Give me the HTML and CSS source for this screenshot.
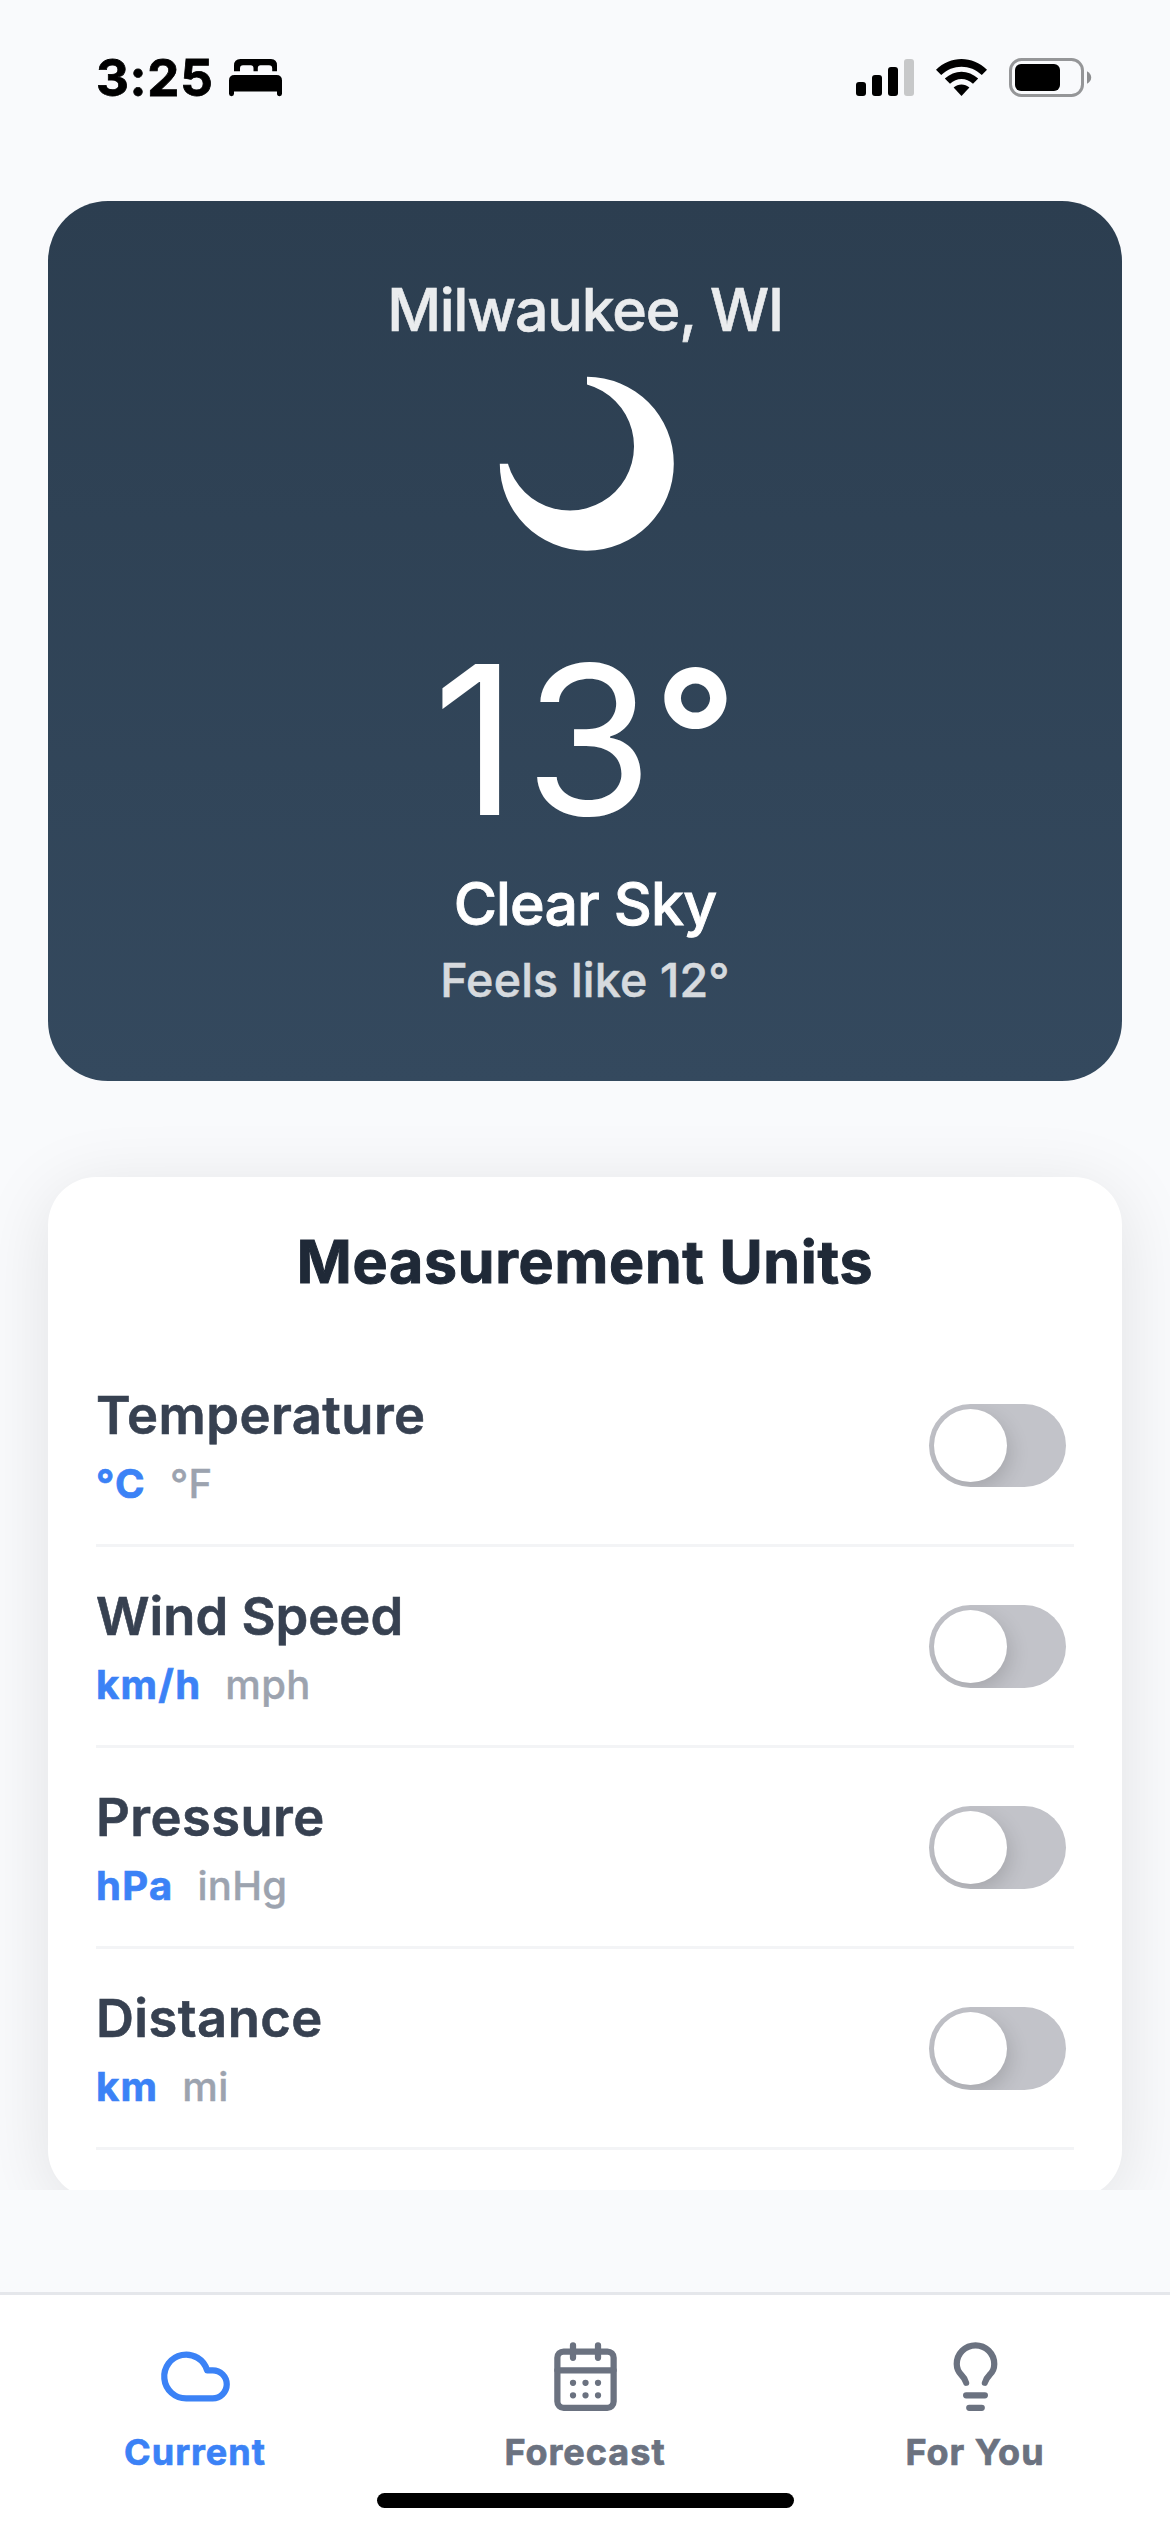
FILE: index.html
```html
<!DOCTYPE html>
<html lang="en">
<head>
<meta charset="utf-8">
<title>Weather</title>
<link rel="stylesheet" href="styles.css">
</head>
<body>
<div class="screen">
  <header class="status">
    <span class="time">3:25</span>
    <svg class="bed" width="53" height="38" viewBox="0 0 53 38">
      <path fill-rule="evenodd" d="M5 12.3V6.5Q5 0 11.500 0H42Q48 0 48 6.500V12.300H43.200V9.500Q43.200 6.300 40 6.300H31.500Q29 6.300 28.800 9V12.300H24.500V9Q24.300 6.300 21.800 6.300H14Q11 6.300 11 9.500V12.300Z"/>
      <path d="M0 21.500Q0 16 5.500 16H47.500Q53 16 53 21.500V34.800Q53 37.200 50.600 37.200Q48 37.200 48 34.800V32.500H5V34.800Q5 37.200 2.500 37.200Q0 37.200 0 34.800Z"/>
    </svg>
    <div class="indicators">
      <svg width="58" height="38" viewBox="0 0 58 38">
        <rect x="0" y="23" width="10" height="14" rx="3"/>
        <rect x="16" y="16" width="10" height="21" rx="3"/>
        <rect x="32" y="8" width="10" height="29" rx="3"/>
        <rect x="48" y="0" width="10" height="37" rx="3" fill="#c7c8c9"/>
      </svg>
      <svg class="wifi" width="51" height="38" viewBox="0 0 51 38">
        <path d="M0 10.800C14.500 -3.600 36.500 -3.600 51 10.800L45.800 16C34.500 4.900 16.500 4.900 5.200 16Z"/>
        <path d="M8.800 19.600C18.500 10.300 32.500 10.300 42.200 19.600L37 24.800C30.300 18.500 20.700 18.500 14 24.800Z"/>
        <path d="M17.600 28.600C22.200 24.600 28.800 24.600 33.400 28.600L25.500 37Z"/>
      </svg>
      <svg class="battery" width="83" height="40" viewBox="0 0 83 40">
        <rect x="1.500" y="1.500" width="72" height="36" rx="11" fill="none" stroke="#959698" stroke-width="3"/>
        <rect x="6" y="6" width="45" height="27" rx="6"/>
        <path d="M78 13.200Q82.200 15.500 82.200 19.500T78 25.800Z" fill="#8d8e90"/>
      </svg>
    </div>
  </header>

  <main class="content">
    <section class="weather">
      <div class="city">Milwaukee, WI</div>
      <svg class="moon" width="180" height="180" viewBox="495 374 180 180">
        <path d="M587 376.700A87 87 0 1 1 499.800 463.700L508 463.700A64.200 64.200 0 1 0 587 384.500Z" fill="#fff"/>
      </svg>
      <div class="temp"><span class="lead">1</span><span class="tail">3</span><span class="degree">°</span></div>
      <div class="condition">Clear Sky</div>
      <div class="feels">Feels like 12°</div>
    </section>

    <section class="units">
      <h2>Measurement Units</h2>
      <div class="row">
        <div><div class="label">Temperature</div><div class="options"><b>°C</b><span>°F</span></div></div>
        <div class="toggle"><i></i></div>
      </div>
      <div class="row">
        <div><div class="label label-tight">Wind Speed</div><div class="options"><b>km/h</b><span>mph</span></div></div>
        <div class="toggle"><i></i></div>
      </div>
      <div class="row">
        <div><div class="label">Pressure</div><div class="options"><b>hPa</b><span>inHg</span></div></div>
        <div class="toggle"><i></i></div>
      </div>
      <div class="row">
        <div><div class="label">Distance</div><div class="options"><b>km</b><span>mi</span></div></div>
        <div class="toggle"><i></i></div>
      </div>
    </section>
  </main>

  <nav class="tabs">
    <a class="tab active">
      <svg class="icon" viewBox="0 0 24 24"><path d="M17.500 19H9a7 7 0 1 1 6.710-9h1.790a4.500 4.500 0 1 1 0 9Z"/></svg>
      <span>Current</span>
    </a>
    <a class="tab">
      <svg class="icon" viewBox="0 0 24 24"><path d="M8 2v4M16 2v4M3 10h18M8 14h.01M12 14h.01M16 14h.01M8 18h.01M12 18h.01M16 18h.01"/><rect x="3" y="4" width="18" height="18" rx="2"/></svg>
      <span>Forecast</span>
    </a>
    <a class="tab">
      <svg class="icon" viewBox="0 0 24 24"><path d="M15 14c.2-1 .7-1.700 1.500-2.500 1-.9 1.500-2.200 1.500-3.500A6 6 0 0 0 6 8c0 1 .2 2.200 1.500 3.500.7.7 1.300 1.500 1.500 2.500M9 18h6M10 22h4"/></svg>
      <span>For You</span>
    </a>
    <div class="home"></div>
  </nav>
</div>
</body>
</html>
```
FILE: styles.css
```css
* {
  box-sizing: border-box;
}

body {
  margin: 0;
  font-family: Inter, "Liberation Sans", sans-serif;
  background: #f9fafc;
}

.screen {
  display: flex;
  flex-direction: column;
  width: 1170px;
  height: 2532px;
  overflow: hidden;
}

/* Status bar */
.status {
  display: flex;
  align-items: flex-start;
  height: 153px;
  flex: none;
  padding: 59px 78px 0 96px;
}

.time {
  width: 133px;
  font-size: 51px;
  font-weight: 700;
  line-height: 60px;
  letter-spacing: 0.7px;
  margin-top: -11px;
  -webkit-text-stroke: 0.8px;
}

.indicators {
  display: flex;
  margin-left: auto;
}

.wifi {
  margin-left: 22px;
}

.battery {
  margin: -1px 0 0 22px;
}

/* Scrolling content */
.content {
  flex: none;
  height: 2037px;
  padding: 48px 48px 0;
  overflow: hidden;
}

.weather {
  display: flex;
  flex-direction: column;
  align-items: center;
  height: 880px;
  padding-top: 73px;
  border-radius: 60px;
  background: linear-gradient(#2c3e50, #34495e);
  color: #fff;
}

.city {
  font-size: 59px;
  font-weight: 500;
  line-height: 72px;
  letter-spacing: -1.15px;
  opacity: 0.9;
  -webkit-text-stroke: 0.6px;
}

.moon {
  margin-top: 28px;
}

.temp {
  margin-top: 65px;
  font-size: 208px;
  font-weight: 400;
  line-height: 240px;
}

.lead {
  letter-spacing: 7px;
}

.tail {
  letter-spacing: 1px;
}

.degree {
  font-size: 182px;
  font-weight: 600;
  line-height: 0;
  vertical-align: 15px;
}

.condition {
  margin-top: 9px;
  font-size: 59px;
  font-weight: 500;
  line-height: 72px;
  letter-spacing: -0.9px;
  -webkit-text-stroke: 0.9px;
}

.feels {
  margin-top: 10px;
  font-size: 46.5px;
  font-weight: 500;
  line-height: 60px;
  letter-spacing: 0.2px;
  opacity: 0.8;
  -webkit-text-stroke: 0.5px;
}

.units {
  height: 1021px;
  margin-top: 96px;
  padding: 49px 48px 48px;
  border-radius: 48px;
  background: #fff;
  box-shadow: 0 12px 72px rgba(0, 0, 0, 0.1);
}

.units h2 {
  margin: 0 0 48px;
  font-size: 59px;
  font-weight: 700;
  line-height: 72px;
  letter-spacing: 0.75px;
  text-align: center;
  color: #1f2937;
  -webkit-text-stroke: 1px;
}

.row {
  display: flex;
  align-items: center;
  justify-content: space-between;
  height: 201px;
  padding-right: 8px;
  border-bottom: 3px solid #f3f4f6;
}

.label {
  font-size: 52.5px;
  font-weight: 600;
  line-height: 64px;
  letter-spacing: 0.45px;
  color: #374151;
  -webkit-text-stroke: 0.6px;
}

.label-tight {
  letter-spacing: 0;
}

.options {
  display: flex;
  gap: 24px;
  margin-top: 13px;
  font-size: 40px;
  font-weight: 500;
  line-height: 48px;
  letter-spacing: 0.3px;
  color: #9ca3af;
  -webkit-text-stroke: 0.4px;
}

.options b {
  font-weight: 700;
  letter-spacing: 1.3px;
  color: #3b82f6;
  -webkit-text-stroke: 0.7px;
}

.toggle {
  width: 137px;
  height: 83px;
  padding: 5px;
  border-radius: 42px;
  background: #c2c3c9;
  overflow: hidden;
}

.toggle i {
  display: block;
  width: 73px;
  height: 73px;
  border-radius: 50%;
  background: #fff;
  box-shadow: 3px 7px 20px rgba(0, 0, 0, 0.15);
}

/* Tab bar */
.tabs {
  position: relative;
  display: flex;
  height: 240px;
  margin-top: 102px;
  padding-top: 44px;
  border-top: 3px solid #e5e7eb;
  background: #fff;
}

.tab {
  display: flex;
  flex: 1;
  flex-direction: column;
  align-items: center;
  gap: 16px;
  font-size: 36px;
  font-weight: 700;
  line-height: 44px;
  letter-spacing: 1px;
  color: #6b7280;
  -webkit-text-stroke: 0.7px;
}

.active {
  color: #3b82f6;
}

.icon {
  width: 75px;
  height: 75px;
  fill: none;
  stroke: currentColor;
  stroke-width: 2;
  stroke-linecap: round;
  stroke-linejoin: round;
}

.home {
  position: absolute;
  left: 377px;
  bottom: 24px;
  width: 417px;
  height: 15px;
  border-radius: 8px;
  background: #000;
}
```
